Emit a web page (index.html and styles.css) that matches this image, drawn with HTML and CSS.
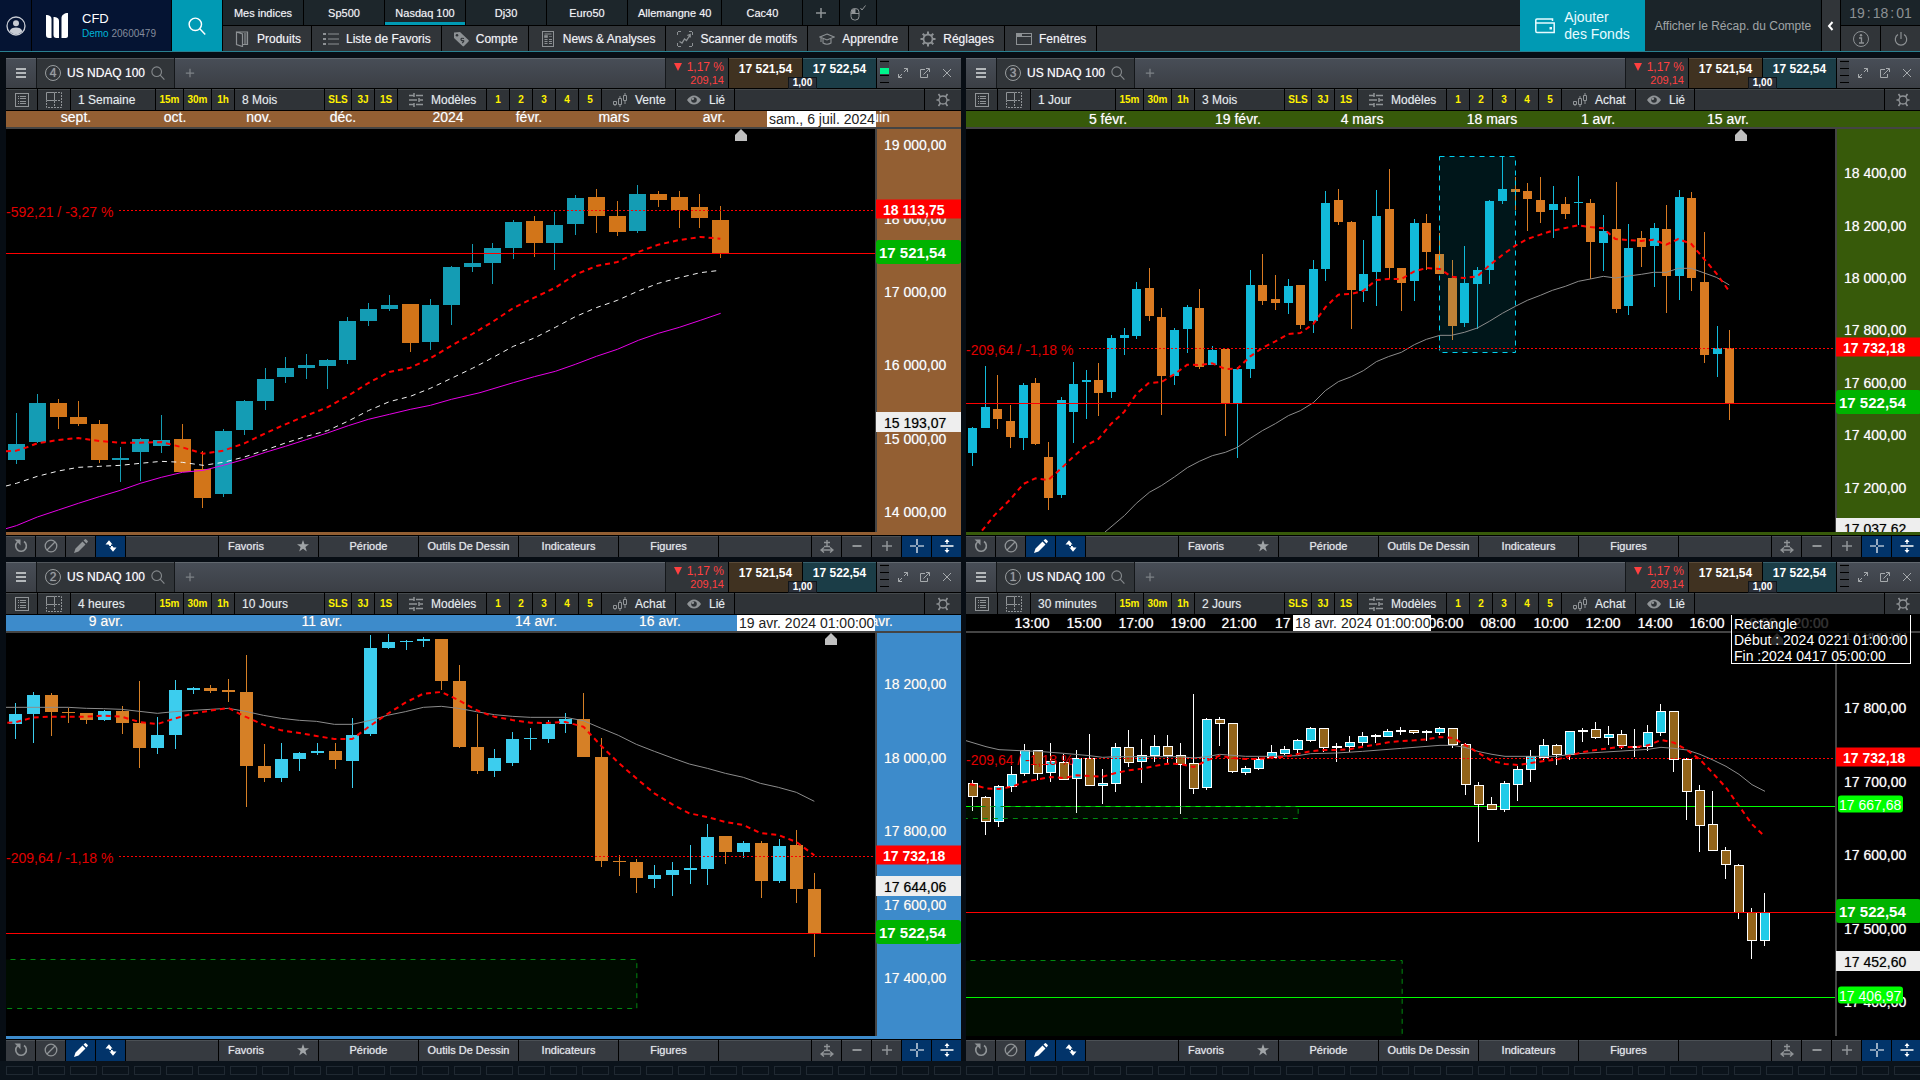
FILE: index.html
```html
<!DOCTYPE html>
<html lang="fr">
<head>
<meta charset="utf-8">
<title>US NDAQ 100 - CFD</title>
<link rel="stylesheet" href="styles.css">
</head>
<body>
<svg class="sprite" aria-hidden="true">
  <symbol id="i-user" viewBox="0 0 20 20"><circle cx="10" cy="10" r="9" fill="none" stroke="currentColor" stroke-width="1.3"/><circle cx="10" cy="7.3" r="3" fill="currentColor"/><path d="M3.6 15.2C4.5 12.4 7 11.4 10 11.4s5.5 1 6.4 3.8A8.3 8.3 0 0 1 10 18.3a8.3 8.3 0 0 1-6.4-3.1z" fill="currentColor"/></symbol>
  <symbol id="i-logo" viewBox="0 0 22 26"><path d="M0 2c3 0 5.500 1 5.500 4v19H3c-2 0-3-1-3-3zM7.500 4c3 0 5.500 1 5.500 4v17h-2.500c-2 0-3-1-3-3zM22 0v23c0 1-1 2-2 2h-4.500V5c0-3 3-5 6.500-5z" fill="currentColor"/></symbol>
  <symbol id="i-search" viewBox="0 0 16 16"><circle cx="6.500" cy="6.500" r="5.500" fill="none" stroke="currentColor" stroke-width="1.300"/><path d="M10.500 10.500L15.300 15.500" stroke="currentColor" stroke-width="1.300"/></symbol>
  <symbol id="i-plus" viewBox="0 0 12 12"><path d="M6 1v10M1 6h10" stroke="currentColor" stroke-width="1.500"/></symbol>
  <symbol id="i-minus" viewBox="0 0 12 12"><path d="M1.500 6h9" stroke="currentColor" stroke-width="2"/></symbol>
  <symbol id="i-mouse" viewBox="0 0 16 16"><rect x="1" y="3.500" width="8" height="11.500" rx="3.500" fill="none" stroke="currentColor"/><path d="M1 8.500h8M5 3.500v5" stroke="currentColor"/><path d="M1.500 8V6.500Q1.500 4 5 4v4z" fill="currentColor"/><path d="M10.500 3l1.500 2 3.500-4.500" fill="none" stroke="currentColor"/></symbol>
  <symbol id="i-door" viewBox="0 0 16 16"><path d="M2.500 1h11v12.500H9M2.500 1L8.500 3v12.500l-6-2z" fill="none" stroke="currentColor" stroke-width="1.200"/><path d="M10 2v11h2.500V2z" fill="currentColor" opacity=".6"/></symbol>
  <symbol id="i-list" viewBox="0 0 16 16"><path d="M0 3h3M0 8h3M0 13h3" stroke="currentColor" stroke-width="2"/><path d="M5 3h11M5 8h11M5 13h11" stroke="currentColor" stroke-width="1"/></symbol>
  <symbol id="i-tag" viewBox="0 0 16 16"><path d="M1 1.500L7 1l8.500 8c.5.500.5 1 0 1.500L11 15c-.5.500-1 .5-1.500 0L1 7z" fill="currentColor"/><circle cx="4" cy="4.200" r="1.300" fill="#313539"/><path d="M11 7.500q-3-.8-3 .8t2 1.400-.8 2.300" fill="none" stroke="#313539" stroke-width="1.200"/></symbol>
  <symbol id="i-news" viewBox="0 0 16 16"><rect x="2.500" y=".5" width="11" height="15" fill="none" stroke="currentColor"/><path d="M4.500 3h7M4.500 8.500h3M4.500 10.500h3M4.500 12.500h3M9 8.500h3M9 10.500h3M9 12.500h3" stroke="currentColor"/><path d="M4.500 4.500h3v2h-3zM9 5.500h3" fill="currentColor" stroke="currentColor" stroke-width=".6"/></symbol>
  <symbol id="i-scan" viewBox="0 0 16 16"><path d="M.5 4V.500H4M12 .5h3.500V4M15.500 12v3.500H12M4 15.500H.500V12" fill="none" stroke="currentColor" stroke-dasharray="3 1"/><path d="M2.500 10.500l2.500 1.500 2.500-4 2 1.500L13 4M10.300 4.500L13.200 3.500v3" fill="none" stroke="currentColor" stroke-width="1.300"/></symbol>
  <symbol id="i-learn" viewBox="0 0 16 16"><path d="M8 3l7 3-7 3-7-3zM4 8v4q4 2.500 8 0V8M2 7v4" fill="none" stroke="currentColor" stroke-width="1.100"/></symbol>
  <symbol id="i-gear" viewBox="0 0 16 16"><circle cx="8" cy="8" r="4.500" fill="none" stroke="currentColor" stroke-width="1.800"/><path d="M8 .5v3M8 12.500v3M.5 8h3M12.500 8h3M2.700 2.700l2.100 2.100M11.200 11.200l2.100 2.100M2.700 13.300l2.100-2.100M11.200 4.800l2.100-2.100" stroke="currentColor" stroke-width="2"/></symbol>
  <symbol id="i-window" viewBox="0 0 16 16"><rect x=".5" y="2.500" width="15" height="11" fill="none" stroke="currentColor"/><path d="M1 5.500h14" stroke="currentColor"/><path d="M1 4h5" stroke="currentColor" stroke-width="2"/></symbol>
  <symbol id="i-wallet" viewBox="0 0 20 16"><path d="M.8 12.500V2Q.8 1 2 1h15.500v2M.8 5h18.400v9.500H2Q.8 14.500.8 13z" fill="none" stroke="currentColor" stroke-width="1.500"/><path d="M14.500 9h2.500v2.500h-2.500z" fill="currentColor"/></symbol>
  <symbol id="i-left" viewBox="0 0 8 10"><path d="M5.500 1L2 5l3.500 4" fill="none" stroke="currentColor" stroke-width="2"/></symbol>
  <symbol id="i-info" viewBox="0 0 18 18"><circle cx="9" cy="9" r="7.500" fill="none" stroke="currentColor"/><path d="M7 8h2.500v4.500M7 13h5" fill="none" stroke="currentColor" stroke-width="1.300"/><circle cx="9" cy="5.300" r="1.200" fill="currentColor"/></symbol>
  <symbol id="i-power" viewBox="0 0 16 16"><path d="M8 1v7M5 3.500a5.700 5.700 0 1 0 6 0" fill="none" stroke="currentColor" stroke-width="1.200"/></symbol>
  <symbol id="i-menu" viewBox="0 0 10 12"><path d="M0 2h10M0 6h10M0 10h10" stroke="currentColor" stroke-width="2"/></symbol>
  <symbol id="i-doc" viewBox="0 0 14 14"><rect x=".5" y=".5" width="13" height="13" fill="none" stroke="currentColor"/><path d="M3 3.500h1M3 5.500h1M3 8.500h1M3 10.500h1M5 3.500h6M5 5.500h6M5 8.500h6M5 10.500h6" stroke="currentColor"/></symbol>
  <symbol id="i-grid" viewBox="0 0 16 16"><path d="M.5 8.500V.500h8v8z" fill="none" stroke="currentColor"/><path d="M9 .5h6.500v15H.500V9M8.500 9v6M9 8.500h6" fill="none" stroke="currentColor" stroke-dasharray="2 1"/></symbol>
  <symbol id="i-sliders" viewBox="0 0 14 14"><path d="M0 2.500h5M7 2.500h7M0 7h8M10.500 7H14M0 11.500h5M7 11.500h7" stroke="currentColor" stroke-width="1.500"/><path d="M5 0v4M10 5v4M5 10v4" stroke="currentColor" stroke-width="1.500"/></symbol>
  <symbol id="i-candles" viewBox="0 0 14 14"><path d="M.5 8.500h3v3h-3zM5.500 5.500h3v6h-3zM10.500 2.500h3v5h-3zM2 11.500V13M7 3v2.500M7 11.500V14M12 0v2.500M12 7.500V11" fill="none" stroke="currentColor"/></symbol>
  <symbol id="i-eye" viewBox="0 0 14 10"><path d="M0 5Q3 .5 7 .5T14 5Q11 9.500 7 9.500T0 5z" fill="currentColor"/><circle cx="7" cy="5" r="2.800" fill="#2f3337"/><circle cx="5.800" cy="3.800" r="1.300" fill="currentColor"/></symbol>
  <symbol id="i-cog" viewBox="0 0 14 14"><circle cx="7" cy="7" r="4" fill="none" stroke="currentColor" stroke-width="1.300"/><path d="M4.500 4L2.500 1M9.500 4l2-3M4.500 10l-2 3M9.500 10l2 3M3 7H.500M11 7h2.500" stroke="currentColor" stroke-width="1.600"/></symbol>
  <symbol id="i-expand" viewBox="0 0 10 10"><path d="M6 .5h3.500V4M9.500.5L6 4M.5 6v3.500H4M.5 9.500L4 6" fill="none" stroke="currentColor"/></symbol>
  <symbol id="i-pop" viewBox="0 0 10 10"><path d="M5 1.500H.500v8h7V6M3.500 6.500L9 1M6 .5h3.500V4" fill="none" stroke="currentColor"/></symbol>
  <symbol id="i-close" viewBox="0 0 10 10"><path d="M1 1l8 8M9 1L1 9" stroke="currentColor"/></symbol>
  <symbol id="i-reset" viewBox="0 0 14 14"><path d="M10 2.500a5.300 5.300 0 1 1-6.500.5" fill="none" stroke="currentColor" stroke-width="1.600"/><path d="M.5.500h6v6L4.800 4.500z" fill="currentColor"/></symbol>
  <symbol id="i-ban" viewBox="0 0 14 14"><circle cx="7" cy="7" r="5.800" fill="none" stroke="currentColor" stroke-width="1.300"/><path d="M3 11l8-8" stroke="currentColor" stroke-width="1.300"/></symbol>
  <symbol id="i-pencil" viewBox="0 0 14 14"><path d="M0 14l1.500-4.500L8.500 2.500l3 3-7 7zM9.500 1.500L11 .3q.6-.4 1.200.1L13.700 2q.4.500 0 1L12.500 4.500z" fill="currentColor"/></symbol>
  <symbol id="i-updown" viewBox="0 0 12 12"><path d="M.5 4.500L4 .3l3.500 4.200zM3.500 4.500h2.500v1.500H4.500zM4.500 7.500h7L8 11.700zM6 6h1.500l1 1.500H6z" fill="currentColor"/></symbol>
  <symbol id="i-star" viewBox="0 0 12 12"><path d="M6 0l1.500 4.300H12L8.400 7l1.400 4.500L6 8.800l-3.800 2.700L3.600 7 0 4.300h4.500z" fill="currentColor"/></symbol>
  <symbol id="i-fit" viewBox="0 0 14 14"><path d="M7 1v7M4 3.500h6M4 7.500h6M2 11h10M4 8.500L1 11l3 2.500M10 8.500l3 2.500-3 2.500" fill="none" stroke="currentColor" stroke-width="1.400"/></symbol>
  <symbol id="i-cross" viewBox="0 0 14 14"><path d="M7 0v6M7 8v6M0 7h6M8 7h6" stroke="currentColor" stroke-width="1.200"/></symbol>
  <symbol id="i-split" viewBox="0 0 14 14"><path d="M.5 7h13M7 1v4M7 9v4" stroke="currentColor" stroke-width="1.300"/><path d="M7 0l2.500 3h-5zM7 14l2.500-3h-5z" fill="currentColor"/></symbol>
  <symbol id="i-marker" viewBox="0 0 12 12"><path d="M6 0l6 6v6H0V6z" fill="currentColor"/></symbol>
</svg>

<header class="topbar">
  <button class="avatar" aria-label="Profil"><svg class="ic20"><use href="#i-user"/></svg></button>
  <div class="brand">
    <svg class="logo"><use href="#i-logo"/></svg>
    <div class="account"><div class="account-type">CFD</div><div class="account-id"><span class="demo">Demo</span> 20600479</div></div>
  </div>
  <button class="search" aria-label="Rechercher"><svg class="ic18"><use href="#i-search"/></svg></button>
  <div class="navs">
    <nav class="tabs">
      <a href="#">Mes indices</a><a href="#">Sp500</a><a href="#" class="active">Nasdaq 100</a><a href="#">Dj30</a><a href="#">Euro50</a><a href="#">Allemangne 40</a><a href="#">Cac40</a>
      <button aria-label="Ajouter"><svg class="ic12"><use href="#i-plus"/></svg></button>
      <button aria-label="Souris"><svg class="ic16"><use href="#i-mouse"/></svg></button>
    </nav>
    <nav class="menu">
      <a href="#"><svg class="ic16"><use href="#i-door"/></svg>Produits</a>
      <a href="#"><svg class="ic16"><use href="#i-list"/></svg>Liste de Favoris</a>
      <a href="#"><svg class="ic16"><use href="#i-tag"/></svg>Compte</a>
      <a href="#"><svg class="ic16"><use href="#i-news"/></svg>News &amp; Analyses</a>
      <a href="#"><svg class="ic16"><use href="#i-scan"/></svg>Scanner de motifs</a>
      <a href="#"><svg class="ic16"><use href="#i-learn"/></svg>Apprendre</a>
      <a href="#"><svg class="ic16"><use href="#i-gear"/></svg>Réglages</a>
      <a href="#"><svg class="ic16"><use href="#i-window"/></svg>Fenêtres</a>
    </nav>
  </div>
  <button class="funds"><svg class="wallet"><use href="#i-wallet"/></svg><span>Ajouter<br>des Fonds</span></button>
  <button class="recap">Afficher le Récap. du Compte</button>
  <button class="fold" aria-label="Replier"><svg class="ic-left"><use href="#i-left"/></svg></button>
  <div class="status">
    <time class="clock"><span>19</span><span>:</span><span>18</span><span>:</span><span>01</span></time>
    <div class="status-row">
      <button aria-label="Informations"><svg class="ic18"><use href="#i-info"/></svg></button>
      <button aria-label="Déconnexion"><svg class="ic16"><use href="#i-power"/></svg></button>
    </div>
  </div>
</header>

<main class="panels" id="panels"></main>
<footer class="dock" id="dock"></footer>
<script src="app.js"></script>
</body>
</html>
```
FILE: styles.css
```css
* { box-sizing: border-box; }
body {
  margin: 0;
  height: 100vh;
  min-height: 600px;
  display: flex;
  flex-direction: column;
  overflow: hidden;
  background: #070d14;
  color: #e6eaec;
  font: 12px/14px "Liberation Sans", Arial, sans-serif;
}
button { font: inherit; color: inherit; border: 0; margin: 0; padding: 0; background: none; white-space: nowrap; }
a { color: inherit; text-decoration: none; }
svg { display: block; flex: none; }
.sprite { position: absolute; width: 0; height: 0; }
.ic10 { width: 10px; height: 10px; }
.ic12 { width: 12px; height: 12px; }
.ic14 { width: 14px; height: 14px; }
.ic16 { width: 16px; height: 16px; }
.ic18 { width: 18px; height: 18px; }
.ic20 { width: 20px; height: 20px; }

/* top bar */
.topbar { display: flex; height: 52px; flex: none; background: #000; border-bottom: 1px solid #2a8090; }
.topbar button { display: flex; align-items: center; justify-content: center; }
.avatar { width: 31px; margin-right: 1px; background: #051433; color: #c8ccd4; }
.brand { width: 139px; margin-right: 1px; padding-left: 14px; display: flex; align-items: center; gap: 14px; background: #051433; }
.logo { width: 22px; height: 26px; color: #fff; }
.account-type { font-size: 13px; line-height: 16px; color: #fff; }
.account-id { font-size: 10px; line-height: 14px; color: #848c9c; }
.demo { color: #00b4d8; }
.search { width: 50px; margin-right: 1px; background: #009ab4; color: #fff; }
.navs { flex: 1; display: flex; flex-direction: column; gap: 1px; min-width: 0; overflow: hidden; }
.tabs, .menu { display: flex; gap: 1px; }
.tabs { height: 25px; background: #1b2429; font-size: 11px; text-shadow: 0 0 1px #889; }
.tabs a, .tabs button { display: flex; align-items: center; justify-content: center; box-shadow: 1px 0 #000; color: #f2f4f5; }
.tabs a { min-width: 80px; padding: 0 10px; background: #1d262b; white-space: nowrap; }
.tabs a.active { box-shadow: 1px 0 #000, inset 0 -3px #009ab4; }
.tabs button { width: 36px; color: #909497; }
.menu { height: 25px; background: #313539; }
.menu a { display: flex; align-items: center; gap: 7px; padding: 0 10px 0 11px; white-space: nowrap; box-shadow: 1px 0 #000; color: #f2f4f5; text-shadow: 0 0 1px #889; }
.menu svg { color: #8d9194; }
.funds { width: 125px; gap: 9px; background: #009ab4; color: #e8fbff; font-size: 14px; line-height: 17px; text-align: left; }
.wallet { width: 20px; height: 16px; }
.recap { width: 176px; margin-right: 1px; background: #1b2429; color: #a0a4a7; }
.fold { width: 18px; background: #313539; color: #fff; }
.ic-left { width: 8px; height: 10px; }
.status { width: 80px; padding-left: 1px; display: flex; flex-direction: column; gap: 1px; color: #8d9194; }
.clock { height: 25px; display: flex; align-items: center; justify-content: center; gap: 2px; background: #1b2429; font-size: 14px; }
.status-row { height: 25px; display: flex; gap: 1px; }
.status-row button { flex: 1; background: #313539; }

/* panel grid; the last column runs one pixel under the window edge */
.panels { flex: 1; min-height: 0; display: grid; grid-template: 1fr 1fr / 1fr 1fr; gap: 5px; padding: 6px 0 0 6px; margin-right: -1px; }
.panel { position: relative; display: flex; flex-direction: column; min-width: 0; min-height: 0; background: #000; }
.panel button { display: flex; align-items: center; }

.head { height: 31px; flex: none; display: flex; border-bottom: 1px solid #000; background: linear-gradient(#484e57, #3b3f45); box-shadow: inset 0 1px #62686f; }
.head .burger { width: 31px; justify-content: center; border-right: 1px solid #14171a; color: #b4b8bb; }
.burger svg { width: 10px; height: 12px; }
.symbol { width: 138px; padding-left: 8px; display: flex; align-items: center; gap: 6px; background: #313539; border-right: 1px solid #14171a; box-shadow: inset 0 1px #50555a; color: #fff; white-space: nowrap; text-shadow: 0 0 1px #99a; }
.symbol svg { color: #85898c; }
.badge { width: 16px; height: 16px; border: 1px solid #999d9f; border-radius: 50%; line-height: 14px; text-align: center; color: #999d9f; }
.head .add { width: 30px; justify-content: center; color: #7d8287; }
.grow { flex: 1; }
.change { width: 63px; padding: 3px 4px 0 0; background: #313539; border-left: 1px solid #14171a; color: #ff4040; text-align: right; line-height: 13px; }
.change small { display: block; font-size: 11px; }
.tri { display: inline-block; border: 4px solid transparent; border-top: 8px solid #ff4040; border-bottom: 0; margin-right: 5px; }
.prices { position: relative; display: flex; gap: 1px; padding: 0 1px; background: #000; }
.panel .price { width: 73px; padding-top: 4px; align-items: flex-start; justify-content: center; font-weight: bold; color: #fff; }
.sell { background: #403221; box-shadow: inset 0 1px #5a4a38; }
.buy { background: #1b3d47; box-shadow: inset 0 1px #38606c; }
.spread { position: absolute; left: 61px; bottom: 0; width: 27px; height: 10px; background: #2b303a; color: #fff; font: bold 10px/10px "Liberation Sans", Arial, sans-serif; text-align: center; box-shadow: 0 0 0 1px #10151a; }
.tail { width: 84px; padding-left: 3px; display: flex; align-items: center; }
.ladder { width: 9px; height: 27px; margin-right: 3px; padding-top: 1px; display: flex; flex-direction: column; gap: 6px; background: #3b3f45; }
.ladder i { height: 1px; background: #000; }
.ladder.live i:nth-child(2) { height: 6px; margin: 0 0 -5px; background: #00f58c; }
.tail button { width: 22px; height: 22px; justify-content: center; color: #a6aaad; }

.tools { height: 22px; flex: none; display: flex; gap: 1px; border-bottom: 1px solid #000; white-space: nowrap; }
.tools > * { background: #2f3337; box-shadow: inset 0 1px #44494c; }
.tools button { justify-content: center; color: #e4ecec; text-shadow: 0 0 1px #778; }
.tools svg { color: #909497; }
.tools .t-doc { width: 31px; }
.tools .t-grid { width: 32px; }
.tools .t-period { width: 84px; padding-left: 7px; justify-content: flex-start; }
.tools .t-range { width: 89px; padding-left: 7px; justify-content: flex-start; }
.tools .quick { font-size: 10px; font-weight: bold; color: #fff200; text-shadow: none; }
.tools .q27 { width: 27px; }
.tools .q26 { width: 26px; }
.tools .q22 { width: 22px; }
.tools .wide { padding-left: 11px; gap: 8px; justify-content: flex-start; }
.tools .w-model { width: 88px; }
.tools .w-side { width: 73px; }
.tools .w-link { width: 58px; }
.eye { width: 14px; height: 10px; }
.tools .t-cog { width: 36px; }

.times { position: relative; height: 18px; flex: none; overflow: hidden; border-bottom: 2px solid #444; background: var(--tone); font-size: 14px; line-height: 16px; color: #fff; text-shadow: 0 0 1px #aaa; }
.times span { position: absolute; top: 0; transform: translateX(-50%); white-space: nowrap; }
.times.high span { top: -2px; }
.times .cursor, .times.high .cursor { top: 0; transform: none; padding: 0 1px 0 2px; background: #fff; color: #222; text-align: center; text-shadow: none; }

.chart { position: relative; flex: 1; min-height: 0; display: flex; overflow: hidden; border-bottom: 3px solid var(--tone); }
.plot { position: relative; flex: 1; min-width: 0; }
.plot > svg { position: absolute; inset: 0; width: 100%; height: 100%; }
.delta { position: absolute; left: 0; transform: translateY(-50%); font-size: 14px; line-height: 16px; color: #e00000; }
.marker { margin-left: -6px; color: #c0c0c0; }
.plot > .marker { inset: 0 auto auto auto; width: 12px; height: 12px; }
.axis { position: relative; width: 86px; border-left: 2px solid #444; background: var(--tone); font-size: 14px; line-height: 16px; color: #fff; text-shadow: 0 0 1px #aaa; }
.axis span { position: absolute; left: 7px; transform: translateY(-50%); white-space: nowrap; }
.axis .tag { left: -1px; width: 85px; padding-left: 8px; text-shadow: none; }
.axis .ref { height: 19px; line-height: 20px; background: #f00; color: #fff; font-weight: bold; padding-left: 7px; }
.axis .last { height: 24px; line-height: 25px; border-radius: 3px; background: #00b300; color: #fff; font-size: 15px; font-weight: bold; padding-left: 3px; }
.axis .hover { height: 20px; line-height: 22px; background: #eee; color: #000; text-shadow: 0 0 1px #888; }
.axis .level { left: 1px; width: 65px; height: 17px; line-height: 19px; border-radius: 3px; background: #00ff00; color: #fff; padding-left: 1px; }
.tip { position: absolute; z-index: 2; top: 53px; right: 10px; width: 180px; height: 49px; padding: 1px 0 0 2px; border: 1px solid #fff; border-top: 0; background: rgba(0, 0, 0, .8); font-size: 14px; line-height: 16px; color: #fff; white-space: nowrap; }

.foot { height: 22px; flex: none; display: flex; gap: 1px; border-top: 1px solid #000; font-size: 11px; }
.foot > * { background: #363a40; box-shadow: inset 0 1px #4b5055; }
.foot button { width: 29px; padding-bottom: 1px; justify-content: center; color: #909497; }
.foot button.on { background: #02346a; color: #fff; box-shadow: none; }
.foot .menu-btn { width: 99px; color: #e4e8ea; text-shadow: 0 0 1px #aab; }
.foot .fav { padding: 0 9px 1px; justify-content: space-between; }
.foot .fav svg { color: #a0a4a7; }
.gap-left { width: 92px; }

.up { fill: var(--up); }
.down { fill: var(--down); }
.edge { fill: #fff; }
.ma { fill: none; stroke-width: 3; stroke-linejoin: round; }
.ma-fast { stroke: #ff0000; stroke-width: 6; stroke-dasharray: 15 12; }
.ma-slow { stroke: #8c8c8c; }
.ma-mid { stroke: #f4f4f4; stroke-dasharray: 15 13; }
.ma-long { stroke: #e800e8; }
.solid { stroke: #ff0000; stroke-width: 3; }
.dotted { stroke: #ff0000; stroke-width: 3; stroke-dasharray: 6 6; }
.lime { stroke: #00ff00; stroke-width: 3; }
.zone-green { fill: rgba(0, 128, 0, .09); stroke: #008a10; stroke-width: 3; stroke-dasharray: 15 15; }
.zone-cyan { fill: rgba(0, 180, 210, .12); stroke: #00d0f0; stroke-width: 3; stroke-dasharray: 15 15; }

.dock { flex: none; height: 19px; display: flex; gap: 5px; padding: 5px 0 0 6px; background: #0b131b; overflow: hidden; }
.dock i { flex: none; width: 27px; height: 9px; border: 1px solid #202932; }
```
FILE: app.js
```js
// Plot units are thirds of a pixel; every plot starts at x = 18.
// Candle: [high, body top, body bottom, low, direction], direction 1 up, 0 down, 2 flat.
const X0 = 18, W = 2607, H = 1209;

const charts = [
  {
    num: 4, period: '1 Semaine', range: '8 Mois', side: 'Vente', tone: '#935f33', up: '#149cb4', down: '#d27519',
    y0: 27, live: true, pencil: false, high: true, first: 49, pitch: 20.7, bias: .2, body: 51,
    times: [['sept.', 70], ['oct.', 169], ['nov.', 253], ['déc.', 337], ['2024', 442], ['févr.', 523], ['mars', 608], ['avr.', 708], ['juin', 873]],
    cursor: ['sam., 6 juil. 2024', 761], marker: 735,
    prices: [['19 000,00', 75], ['18 000,00', 297], ['17 000,00', 516], ['16 000,00', 736], ['15 000,00', 958], ['14 000,00', 1176]],
    tags: [['ref', '18 113,75', 268], ['last', '17 521,54', 396], ['hover', '15 193,07', 906]],
    delta: ['-592,21 / -3,27 %', 277], dotted: 271, solid: 400,
    candles: [[879,972,1020,1032,1],[822,849,966,970,1],[837,849,891,927,0],[843,891,912,918,0],[900,912,1020,1029,0],[981,1014,1020,1086,1],[954,957,996,1083,1],[885,960,978,999,1],[912,957,1056,1056,0],[993,1047,1134,1164,0],[927,933,1122,1131,1],[840,843,930,945,1],[744,777,843,870,1],[711,744,771,789,1],[702,735,744,777,1],[717,720,738,807,1],[591,603,720,732,1],[549,567,603,618,1],[525,555,567,573,1],[552,552,669,696,0],[537,555,666,690,1],[438,441,555,615,1],[372,429,441,456,1],[369,384,429,492,1],[300,306,384,417,1],[288,303,369,411,0],[276,315,369,450,1],[225,234,312,345,1],[207,231,288,339,0],[243,288,336,348,0],[195,222,333,339,1],[213,222,240,261,0],[213,231,270,324,0],[222,261,294,324,0],[258,300,399,414,0]],
    lines: [
      ['ma-long', '18,1226 49,1217 112,1191 175,1170 235,1150 298,1130 361,1111 421,1090 484,1072 547,1057 610,1051 670,1036 733,1018 796,997 856,979 919,959 982,939 1045,917 1105,898 1168,883 1231,868 1291,856 1354,838 1440,818 1540,788 1603,770 1666,754 1726,733 1789,709 1852,688 1915,661 1975,640 2038,622 2101,601 2162,580'],
      ['ma-mid', '18,1098 49,1090 112,1069 175,1053 235,1042 298,1039 361,1036 421,1030 484,1024 547,1027 610,1036 670,1027 733,1011 796,990 856,969 919,949 982,932 1045,903 1105,872 1168,845 1231,829 1291,805 1354,775 1417,745 1452,727 1540,679 1603,654 1666,622 1726,590 1789,563 1852,541 1915,513 1975,490 2038,473 2101,458 2160,451'],
      ['ma-fast', '18,994 49,992 80,982 112,970 175,960 235,954 298,963 361,968 421,968 484,966 547,982 610,1001 670,992 733,970 796,940 856,913 919,887 982,862 1045,827 1105,789 1168,756 1231,743 1291,715 1354,677 1417,642 1480,604 1540,564 1603,533 1666,503 1726,464 1789,438 1852,426 1915,396 1975,374 2038,360 2101,351 2161,356']
    ]
  },
  {
    num: 3, period: '1 Jour', range: '3 Mois', side: 'Achat', tone: '#375a0a', up: '#12bada', down: '#da7b22',
    y0: 27, pencil: true, first: 37, pitch: 12.617, bias: .2, body: 27,
    times: [['5 févr.', 142], ['19 févr.', 272], ['4 mars', 396], ['18 mars', 526], ['1 avr.', 632], ['15 avr.', 762]],
    marker: 775,
    prices: [['18 400,00', 159], ['18 200,00', 318], ['18 000,00', 474], ['17 800,00', 630], ['17 600,00', 789], ['17 400,00', 945], ['17 200,00', 1104]],
    tags: [['ref', '17 732,18', 682], ['last', '17 522,54', 846], ['hover', '17 037,62', 1224]],
    delta: ['-209,64 / -1,18 %', 691], dotted: 685, solid: 850,
    zones: [['zone-cyan', 1439, 109, 228, 588]],
    candles: [[921,924,999,1038,1],[738,861,924,924,1],[765,867,897,927,0],[855,903,951,984,0],[789,795,954,990,1],[774,789,972,975,0],[966,1011,1134,1170,0],[831,840,1125,1134,1],[726,792,876,969,1],[750,780,786,897,1],[729,780,819,888,0],[645,654,816,834,1],[624,645,654,705,1],[486,507,648,657,1],[444,504,588,603,0],[564,591,768,885,0],[624,630,768,795,1],[555,561,627,699,1],[507,564,741,747,0],[678,690,735,735,1],[687,687,850,948,0],[741,747,850,1014,1],[450,495,747,774,1],[402,495,543,555,0],[465,537,549,570,0],[477,498,549,582,1],[495,495,615,627,0],[420,447,603,639,1],[213,249,447,483,1],[207,240,306,315,0],[303,306,510,627,0],[360,462,513,546,1],[210,288,456,558,1],[147,267,444,477,0],[444,444,489,573,0],[297,309,483,543,1],[282,309,396,450,0],[340,402,462,462,0],[420,474,618,660,0],[378,489,609,621,1],[441,450,492,627,1],[240,243,450,492,1],[111,207,243,252,1],[170,207,216,270,0],[189,213,237,333,0],[171,240,276,309,0],[198,252,270,354,1],[231,252,282,297,0],[168,246,249,315,1],[237,249,366,477,0],[285,333,369,453,1],[186,327,567,579,0],[312,384,558,585,1],[333,354,381,441,0],[309,324,378,501,1],[255,327,468,579,0],[210,231,468,540,1],[216,234,474,513,0],[336,486,705,729,0],[618,684,702,771,1],[630,684,850,900,0]],
    lines: [
      ['ma-slow', '435,1236 493,1187 529,1150 568,1117 604,1097 643,1071 682,1043 718,1024 757,1007 796,997 832,982 871,955 907,932 946,911 985,887 1021,872 1060,848 1096,812 1135,785 1174,770 1210,752 1249,725 1285,710 1324,697 1363,674 1399,658 1440,646 1474,646 1513,637 1552,624 1588,604 1627,580 1666,559 1702,541 1741,526 1777,511 1816,499 1855,484 1891,477 1930,469 1966,474 2005,468 2044,463 2080,457 2119,457 2155,445 2194,445 2233,459 2269,472 2308,495'],
      ['ma-fast', '66,1232 103,1186 151,1138 190,1092 226,1075 265,1080 304,1045 340,1010 379,976 415,957 454,911 493,875 529,822 565,790 604,786 643,763 682,734 718,735 757,730 796,747 832,746 871,709 907,684 946,664 985,642 1021,639 1060,612 1096,562 1135,524 1174,522 1210,512 1249,480 1285,477 1324,477 1363,454 1399,444 1440,447 1474,470 1513,474 1552,469 1588,436 1627,405 1666,377 1702,357 1741,344 1777,332 1816,324 1855,316 1891,321 1930,325 1966,357 2005,360 2044,363 2080,359 2119,374 2155,357 2194,372 2233,418 2269,460 2308,514']
    ]
  },
  {
    num: 2, period: '4 heures', range: '10 Jours', side: 'Achat', tone: '#3d8bcb', up: '#3ccdee', down: '#d68026',
    y0: 219, pencil: true, high: true, first: 46, pitch: 17.756, bias: 0, body: 39,
    times: [['9 avr.', 100], ['11 avr.', 316], ['14 avr.', 530], ['16 avr.', 654], ['18 avr.', 866]],
    cursor: ['19 avr. 2024 01:00:00', 731], marker: 825,
    prices: [['18 200,00', 372], ['18 000,00', 594], ['17 800,00', 813], ['17 600,00', 1035], ['17 400,00', 1254]],
    tags: [['ref', '17 732,18', 886], ['hover', '17 644,06', 978], ['last', '17 522,54', 1116]],
    delta: ['-209,64 / -1,18 %', 895], dotted: 889, solid: 1120,
    zones: [['zone-green', 0, 1198, 1909, 147]],
    candles: [[429,462,492,537,1],[396,405,462,549,1],[399,405,456,528,0],[444,456,459,489,0],[459,459,480,492,0],[450,453,480,483,1],[438,453,489,522,0],[363,489,564,624,0],[471,525,564,582,1],[360,390,525,567,1],[381,384,390,402,1],[375,384,393,399,0],[357,390,396,426,0],[285,396,618,741,0],[552,618,654,666,0],[549,597,654,666,1],[576,579,597,633,1],[549,573,579,585,1],[549,573,600,627,0],[474,525,603,684,1],[225,264,522,528,1],[222,246,264,267,1],[240,243,246,270,1],[231,237,243,261,1],[237,237,363,390,0],[315,363,561,564,0],[462,561,633,642,0],[567,594,633,651,1],[516,537,609,618,1],[504,534,537,570,1],[480,492,537,549,1],[459,477,492,519,1],[399,477,591,591,0],[534,591,903,921,0],[885,903,906,948,0],[897,906,954,999,0],[915,945,957,984,1],[906,930,945,1008,1],[855,924,930,972,1],[792,831,927,975,1],[828,828,876,912,0],[843,849,876,894,1],[843,849,963,1014,0],[837,858,963,969,1],[810,855,987,1029,0],[939,987,1119,1191,0]],
    lines: [
      ['ma-slow', '18,442 205,442 259,445 310,446 364,448 418,454 472,460 523,455 577,451 631,448 685,445 736,454 790,466 844,475 898,481 949,484 1003,493 1057,493 1111,481 1162,466 1216,455 1270,442 1324,439 1375,445 1429,455 1483,464 1537,469 1591,472 1696,472 1750,482 1804,505 1855,526 1909,553 1963,574 2017,594 2068,612 2122,625 2176,640 2230,652 2281,670 2335,682 2389,697 2443,724'],
      ['ma-fast', '22,488 46,487 97,473 151,470 259,470 310,467 364,470 418,486 472,492 523,476 577,461 631,452 685,444 736,470 790,494 844,511 898,519 949,528 1003,537 1057,537 1111,497 1162,462 1216,428 1270,401 1324,396 1375,420 1429,450 1445,457 1483,470 1537,480 1591,488 1642,489 1696,486 1750,500 1804,558 1855,608 1909,655 1963,700 2017,733 2068,760 2122,771 2176,786 2230,795 2281,819 2335,825 2389,846 2443,886']
    ]
  },
  {
    num: 1, period: '30 minutes', range: '2 Jours', side: 'Achat', tone: '#000000', up: '#22cbe8', down: '#93641a',
    y0: 219, pencil: true, first: 37, pitch: 12.984, bias: 0, body: 30, outlined: true,
    times: [['13:00', 66], ['15:00', 118], ['17:00', 170], ['19:00', 222], ['21:00', 273], ['17 avr.', 330], ['06:00', 480], ['08:00', 532], ['10:00', 585], ['12:00', 637], ['14:00', 689], ['16:00', 741], ['18:00', 793], ['20:00', 845]],
    cursor: ['18 avr. 2024 01:00:00', 327], marker: 811,
    prices: [['17 900,00', 226], ['17 800,00', 444], ['17 700,00', 666], ['17 600,00', 885], ['17 500,00', 1107], ['17 400,00', 1326]],
    tags: [['ref', '17 732,18', 592], ['level', '17 667,68', 733], ['last', '17 522,54', 1053], ['hover', '17 452,60', 1203], ['level', '17 406,97', 1306]],
    delta: ['-209,64 / -1,18 %', 601], dotted: 595, solid: 1057, limes: [739, 1312],
    zones: [['zone-green', 0, 739, 1013, 36], ['zone-green', 0, 1201, 1325, 300]],
    tip: ['Rectangle', 'Début : 2024 0221 01:00:00', 'Fin :2024 0417 05:00:00'],
    candles: [[660,669,711,753,0],[708,711,786,825,0],[675,678,786,801,1],[618,642,681,696,1],[552,570,642,648,1],[570,570,642,660,0],[549,603,639,666,1],[582,606,660,660,0],[570,594,656,759,1],[522,594,678,678,0],[627,669,678,732,1],[549,561,672,696,1],[510,561,609,621,0],[537,585,606,669,1],[525,558,588,606,1],[525,558,588,609,0],[549,585,615,762,0],[597,609,687,702,0],[474,477,684,690,1],[471,477,492,558,0],[489,489,636,639,0],[618,624,639,645,1],[591,597,627,630,1],[555,576,594,597,1],[558,567,582,585,1],[537,540,570,585,1],[501,504,543,546,1],[504,504,564,576,0],[549,558,564,606,2],[528,546,561,576,1],[516,528,549,558,1],[522,525,531,549,2],[507,513,531,531,1],[501,510,516,525,2],[510,510,519,522,0],[510,513,519,543,2],[501,504,519,525,1],[504,504,555,564,0],[549,552,675,705,0],[666,675,735,846,0],[711,732,750,750,0],[663,669,750,756,1],[618,627,675,723,1],[570,589,630,666,1],[537,555,594,600,1],[552,555,585,615,0],[513,513,585,600,1],[504,510,516,546,2],[486,507,534,537,0],[498,522,534,555,1],[510,522,558,567,0],[507,558,564,591,2],[495,516,561,573,1],[402,453,519,528,1],[453,453,600,636,0],[594,597,696,780,0],[675,690,798,876,0],[693,792,873,873,0],[861,870,915,957,0],[912,915,1058,1077,0],[1044,1057,1143,1197,0],[999,1057,1143,1158,1]],
    lines: [
      ['ma-slow', '18,542 78,560 117,569 180,572 234,574 312,580 389,587 428,592 467,590 584,590 662,590 701,594 740,590 779,583 857,589 935,589 1013,587 1052,581 1130,579 1208,574 1325,565 1440,556 1479,556 1518,563 1557,575 1596,583 1635,589 1791,589 1830,583 1869,580 1986,573 2064,568 2103,562 2142,565 2181,570 2220,583 2259,600 2298,619 2337,643 2376,674 2415,694'],
      ['ma-fast', '30,672 39,674 78,685 117,687 156,680 195,665 234,658 273,651 312,654 350,646 389,648 428,650 467,639 506,631 545,626 584,618 623,611 662,612 701,621 740,602 779,587 818,594 857,597 896,597 935,592 974,591 1013,582 1052,574 1091,570 1130,570 1169,568 1208,560 1247,554 1286,547 1325,543 1364,541 1400,538 1440,531 1479,534 1518,556 1557,580 1596,603 1635,612 1674,615 1713,609 1752,603 1791,599 1830,587 1869,576 1908,570 1947,565 1986,560 2025,562 2064,556 2103,540 2142,548 2181,570 2220,599 2259,640 2298,683 2337,738 2376,793 2415,830']
    ]
  }
];
charts[3].candles[17][0] = 402; // session spike between 19:00 and 21:00
charts[3].candles[53][0] = 432;

const icon = (id, cls) => `<svg class="${cls}"><use href="#i-${id}"/></svg>`;
const mid = y => Math.floor(y / 3) * 3 + 1.5;
const snap = y => Math.round(y / 3) * 3;

function candle(c, row, i) {
  const [hi, top, bot, lo] = row.map(snap);
  const dir = row[4];
  const x = c.first + Math.round(i * c.pitch + c.bias) * 3;
  const bx = x - 1 - Math.floor((c.body - 3) / 6) * 3;
  const cls = dir ? 'up' : 'down';
  const rect = (k, rx, ry, w, h) => `<rect class="${k}" x="${rx}" y="${ry}" width="${w}" height="${h}"/>`;
  const stem = rect(c.outlined ? 'edge' : cls, x - 1, hi, 3, lo - hi);
  if (!c.outlined) return stem + rect(cls, bx, top, c.body, Math.max(3, bot - top));
  const outer = rect('edge', bx, top, c.body, bot - top);
  return stem + outer + (dir === 2 ? '' : rect(cls, bx + 3, top + 3, c.body - 6, bot - top - 6));
}

function hline(cls, y, from) {
  return `<line class="${cls}" x1="${from}" x2="${X0 + W}" y1="${mid(y)}" y2="${mid(y)}"/>`;
}

function plot(c) {
  return `<svg viewBox="${X0} ${c.y0} ${W} ${H}" preserveAspectRatio="none">
    ${(c.limes || []).map(y => hline('lime', y, X0)).join('')}${c.candles.map((r, i) => candle(c, r, i)).join('')}
    ${(c.zones || []).map(z => `<rect class="${z[0]}" x="${mid(z[1])}" y="${mid(z[2])}" width="${z[3]}" height="${z[4]}"/>`).join('')}
    ${c.lines.map(l => `<polyline class="ma ${l[0]}" points="${l[1]}"/>`).join('')}
    ${hline('dotted', c.dotted, 357)}${hline('solid', c.solid, X0)}</svg>`;
}

function panel(c) {
  const pct = y => ((y - c.y0) / H * 100).toFixed(2) + '%';
  const left = x => (x / 955 * 100).toFixed(2) + '%';
  const quick = (list, w) => list.map(t => `<button class="quick ${w}">${t}</button>`).join('');
  return `<section class="panel" style="--tone:${c.tone};--up:${c.up};--down:${c.down}">
    <div class="head">
      <button class="burger" aria-label="Menu">${icon('menu', '')}</button>
      <div class="symbol"><span class="badge">${c.num}</span><span>US NDAQ 100</span>${icon('search', 'ic14')}</div>
      <button class="add" aria-label="Ajouter">${icon('plus', 'ic10')}</button>
      <div class="grow"></div>
      <div class="change"><i class="tri"></i>1,17 %<small>209,14</small></div>
      <div class="prices"><button class="price sell">17 521,54</button><button class="price buy">17 522,54</button><span class="spread">1,00</span></div>
      <div class="tail"><div class="ladder ${c.live ? 'live' : ''}"><i></i><i></i><i></i><i></i></div>
        <button aria-label="Agrandir">${icon('expand', 'ic10')}</button><button aria-label="Détacher">${icon('pop', 'ic10')}</button><button aria-label="Fermer">${icon('close', 'ic10')}</button></div>
    </div>
    <div class="tools">
      <button class="t-doc" aria-label="Ordres">${icon('doc', 'ic14')}</button><button class="t-grid" aria-label="Disposition">${icon('grid', 'ic16')}</button>
      <button class="t-period" aria-haspopup="listbox">${c.period}</button>${quick(['15m', '30m'], 'q27')}${quick(['1h'], 'q22')}
      <button class="t-range" aria-haspopup="listbox">${c.range}</button>${quick(['SLS'], 'q26')}${quick(['3J', '1S'], 'q22')}
      <button class="wide w-model">${icon('sliders', 'ic14')}Modèles</button>${quick([1, 2, 3, 4, 5], 'q22')}
      <button class="wide w-side">${icon('candles', 'ic14')}${c.side}</button><button class="wide w-link">${icon('eye', 'eye')}Lié</button>
      <div class="grow"></div><button class="t-cog" aria-label="Options">${icon('cog', 'ic14')}</button>
    </div>
    <div class="times ${c.high ? 'high' : ''}">${c.times.map(t => `<span style="left:${left(t[1])}">${t[0]}</span>`).join('')}${c.cursor ? `<span class="cursor" style="left:${left(c.cursor[1])}">${c.cursor[0]}</span>` : ''}</div>
    <div class="chart">
      <div class="plot">${plot(c)}<div class="delta" style="top:${pct(c.delta[1])}">${c.delta[0]}</div>
        <svg class="marker" style="left:${(c.marker / 869 * 100).toFixed(2)}%"><use href="#i-marker"/></svg></div>
      <div class="axis">${c.prices.map(p => `<span style="top:${pct(p[1])}">${p[0]}</span>`).join('')}${c.tags.map(t => `<span class="tag ${t[0]}" style="top:${pct(t[2])}">${t[1]}</span>`).join('')}</div>
    </div>
    ${c.tip ? `<div class="tip">${c.tip.map(t => `<div>${t}</div>`).join('')}</div>` : ''}
    <div class="foot">
      <button aria-label="Réinitialiser">${icon('reset', 'ic14')}</button><button aria-label="Effacer">${icon('ban', 'ic14')}</button>
      <button class="${c.pencil ? 'on' : ''}" aria-label="Dessiner">${icon('pencil', 'ic14')}</button><button class="on" aria-label="Échelle">${icon('updown', 'ic12')}</button>
      <div class="gap-left"></div>
      <button class="menu-btn fav">Favoris${icon('star', 'ic12')}</button><button class="menu-btn">Période</button><button class="menu-btn">Outils De Dessin</button><button class="menu-btn">Indicateurs</button><button class="menu-btn">Figures</button>
      <div class="grow"></div>
      <button aria-label="Ajuster">${icon('fit', 'ic14')}</button><button aria-label="Zoom arrière">${icon('minus', 'ic12')}</button><button aria-label="Zoom avant">${icon('plus', 'ic12')}</button>
      <button class="on" aria-label="Réticule">${icon('cross', 'ic14')}</button><button class="on" aria-label="Étirer">${icon('split', 'ic14')}</button>
    </div>
  </section>`;
}

document.getElementById('panels').innerHTML = charts.map(panel).join('');
document.getElementById('dock').innerHTML = '<i></i>'.repeat(60);
```
